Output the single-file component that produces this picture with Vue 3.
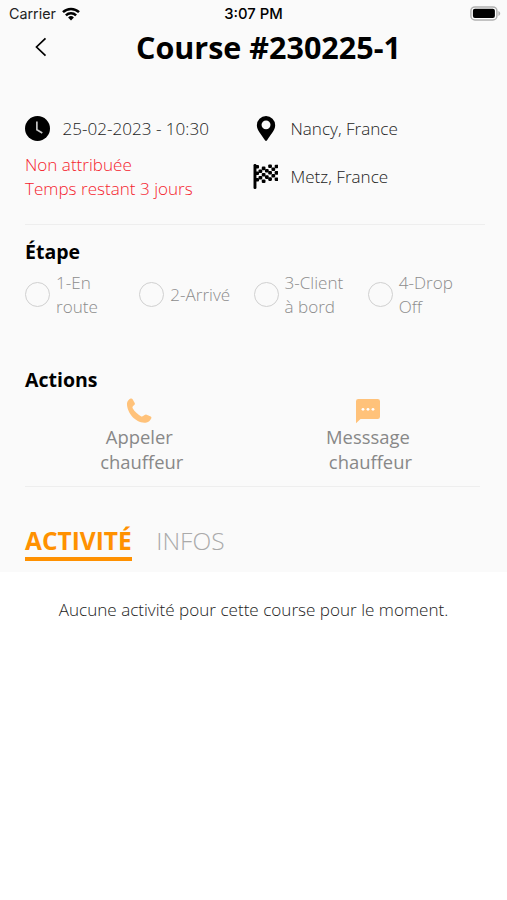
<script setup>
import { ref } from 'vue'

const onglet = ref('activite')

const etapes = [
  { id: 1, lignes: ['1-En', 'route'] },
  { id: 2, lignes: ['2-Arrivé'] },
  { id: 3, lignes: ['3-Client', 'à bord'] },
  { id: 4, lignes: ['4-Drop', 'Off'] }
]

// Cases noires du drapeau à damier
const cases = []
const vague = [0.8, 2, 2.3, 1.4, 0.2, 0.1, 0.4]
for (let l = 0; l < 5; l++) {
  for (let c = 0; c < 7; c++) {
    if ((l + c) % 2 === 0) {
      cases.push({ x: 2.2 + c * 3.1, y: 0.2 + l * 3.1 + vague[c] })
    }
  }
}
</script>

<template>
  <main class="ecran">
    <div class="haut">
      <div class="statut">
        <div class="reseau">
          <span class="operateur">Carrier</span>
          <svg width="18" height="14" viewBox="0 0 18 14">
            <g fill="none" stroke="#000" stroke-width="2.5">
              <path d="M1 5.2a11.4 11.4 0 0 1 16 0" />
              <path d="M3.9 8.3a7.3 7.3 0 0 1 10.2 0" />
            </g>
            <path d="M9 13.4 6.1 10.5a4.2 4.2 0 0 1 5.8 0z" />
          </svg>
        </div>
        <span class="heure">3:07 PM</span>
        <div class="batterie">
          <svg width="31" height="15" viewBox="0 0 31 15">
            <rect x=".9" y=".9" width="26" height="13" rx="4" fill="#fff" stroke="#b0b0b0" stroke-width="1.5" />
            <rect x="2.9" y="2.8" width="22" height="9.2" rx="2" />
            <path d="M28.4 5v5c1.1-.4 1.8-1.4 1.8-2.5s-.7-2.1-1.8-2.5z" fill="#b0b0b0" />
          </svg>
        </div>
      </div>

      <header class="entete">
        <button class="retour" aria-label="Retour">
          <svg width="12" height="20" viewBox="0 0 12 20">
            <path d="M10.5 1.3 1.5 10l9 8.7" fill="none" stroke="#000" stroke-width="1.7" />
          </svg>
        </button>
        <h1>Course #230225-1</h1>
      </header>

      <section class="resume">
        <div class="colonne">
          <div class="info">
            <svg class="icone" viewBox="0 0 24 24">
              <circle cx="12" cy="12" r="12" />
              <path d="M11.4 5.2v8l5.2 3.2" fill="none" stroke="#c9c9c9" stroke-width="1.6" />
            </svg>
            <span class="date">25-02-2023 - 10:30</span>
          </div>
          <p class="alerte">
            <span class="l1">Non attribuée</span>
            <span class="l2">Temps restant 3 jours</span>
          </p>
        </div>
        <div class="colonne">
          <div class="info">
            <svg class="icone" viewBox="0 0 24 24">
              <path fill-rule="evenodd" d="M12.5 0a8.8 8.8 0 0 0-8.8 8.8c0 5.2 4.4 8.7 7.8 14.5q1 1.4 2 0c3.4-5.8 7.8-9.3 7.8-14.5A8.8 8.8 0 0 0 12.5 0zm0 4.2a4.3 4.3 0 1 1 0 8.6 4.3 4.3 0 0 1 0-8.6z" />
            </svg>
            <span class="depart">Nancy, France</span>
          </div>
          <div class="info arrivee">
            <svg class="icone" viewBox="0 0 24 24">
              <rect x="0.5" y="0" width="2.8" height="24" rx="1.2" />
              <rect v-for="(c, i) in cases" :key="i" :x="c.x" :y="c.y" width="3.6" height="3.4" rx="1" />
            </svg>
            <span class="destination">Metz, France</span>
          </div>
        </div>
      </section>

      <section class="etape">
        <h2>Étape</h2>
        <ul class="etapes">
          <li v-for="e in etapes" :key="e.id">
            <i class="rond"></i>
            <span class="libelle"><span v-for="l in e.lignes" :key="l">{{ l }}</span></span>
          </li>
        </ul>
      </section>

      <section class="actions">
        <h2>Actions</h2>
        <div class="boutons">
          <button class="action">
            <svg width="26" height="26" viewBox="0 0 26 26">
              <path d="M1 5.3C1.2 3.4 2.8 1.5 4.6.6q1.3-.5 2 .7l2.1 3.6q.6 1.2-.5 2.2L6.9 8.3q-.7.9-.2 1.9c1.9 3.3 5 6.2 8.6 8.2q1 .4 1.8-.3l1.5-1.1q1-.8 2.1-.3l4 1.8q1.1.8.5 2c-1.1 2.1-2.7 3.6-4.6 4C10.5 26.3.5 14.900 1 5.300z" fill="#ffc27a" />
            </svg>
            <span>Appeler</span>
            <span class="suite">chauffeur</span>
          </button>
          <button class="action">
            <svg width="26" height="26" viewBox="0 0 26 26">
              <path d="M3.3 1h19.4q2.3 0 2.3 2.3v15.4q0 2.3-2.3 2.3H5.5L1 25.3V3.3Q1 1 3.3 1z" fill="#ffc27a" />
              <g fill="#fff"><circle cx="8" cy="11.3" r="1.4" /><circle cx="13" cy="11.3" r="1.4" /><circle cx="18" cy="11.3" r="1.4" /></g>
            </svg>
            <span>Messsage</span>
            <span class="suite">chauffeur</span>
          </button>
        </div>
      </section>

      <nav class="onglets">
        <button :class="{ actif: onglet === 'activite' }" @click="onglet = 'activite'"><span>ACTIVITÉ</span></button>
        <button :class="{ actif: onglet === 'infos' }" @click="onglet = 'infos'"><span>INFOS</span></button>
      </nav>
    </div>

    <p v-if="onglet === 'activite'" class="vide">Aucune activité pour cette course pour le moment.</p>
  </main>
</template>

<style>
body {
  margin: 0;
  background: #fff;
}
</style>

<style scoped>
.ecran {
  width: 507px;
  height: 900px;
  overflow: hidden;
  background: #fff;
  font-family: 'Open Sans', sans-serif;
  font-weight: 300;
  font-size: 17.08px;
  line-height: 24px;
  color: #222;
  white-space: nowrap;
}

.haut {
  height: 572px;
  background: #fafafa;
}

button {
  border: none;
  background: none;
  padding: 0;
  font: inherit;
  color: inherit;
  cursor: pointer;
}

h1, h2, p, ul {
  margin: 0;
  padding: 0;
}

h2 {
  font-size: 19.5px;
  line-height: 26px;
  font-weight: 700;
  color: #000;
}

/* Barre de statut */
.statut {
  display: grid;
  grid-template-columns: 1fr auto 1fr;
  align-items: center;
  height: 27px;
  padding: 0 6px 0 9px;
  font-family: Inter, sans-serif;
  font-size: 14px;
  color: #222;
}

.reseau {
  display: flex;
  align-items: center;
  gap: 6px;
  font-weight: 400;
}

.operateur {
  font-size: 14.3px;
}

.heure {
  margin-right: 3px;
  font-size: 14.8px;
  font-weight: 500;
  color: #000;
}

.batterie {
  display: flex;
  justify-content: flex-end;
}

/* Titre */
.entete {
  display: flex;
  align-items: center;
  height: 40px;
  padding-left: 35px;
}

.retour {
  display: flex;
  width: 101px;
}

h1 {
  font-size: 30.5px;
  line-height: 40px;
  font-weight: 700;
  color: #000;
}

/* Date et trajet */
.resume {
  display: flex;
  margin: 49px 22px 0 25px;
  height: 108px;
  border-bottom: 1px solid #eee;
}

.colonne {
  width: 228px;
}

.info {
  display: flex;
  align-items: center;
  gap: 12.5px;
  height: 24px;
}

.info span {
  padding-top: 1px;
}

.arrivee {
  margin-top: 24px;
}

.icone {
  width: 25px;
  height: 25px;
  flex: none;
}

.alerte {
  margin-top: 13px;
  color: #f5222d;
}

.alerte span {
  display: block;
}

/* Étapes */
.etape {
  margin: 14px 25px 0;
}

.etapes {
  display: flex;
  align-items: center;
  height: 48px;
  margin-top: 5px;
  list-style: none;
}

.etapes li {
  display: flex;
  align-items: center;
  gap: 6px;
  width: 114.3px;
  color: #8c8c8c;
}

.rond {
  box-sizing: border-box;
  width: 25px;
  height: 25px;
  border: 1px solid #d0d0d0;
  border-radius: 50%;
}

.libelle {
  padding-top: 1px;
}

.libelle span {
  display: block;
}

/* Actions */
.actions {
  margin: 49px 27px 0 25px;
  height: 119px;
  border-bottom: 1px solid #eee;
}

.boutons {
  display: flex;
  margin-top: 5px;
}

.action {
  display: flex;
  flex-direction: column;
  align-items: center;
  width: 228.6px;
  flex: none;
  font-size: 18.4px;
  line-height: 25px;
  font-weight: 400;
  color: #888;
}

.action svg {
  height: 26px;
}

.suite {
  padding-left: 5px;
}

/* Onglets */
.onglets {
  display: flex;
  gap: 24.5px;
  margin: 37px 25px 0;
  font-size: 24.5px;
  line-height: 34px;
  color: #aaa;
}

.onglets button {
  height: 33px;
  border-bottom: 4px solid transparent;
  box-sizing: content-box;
}

.onglets .actif {
  font-weight: 700;
  color: #ff9100;
  border-bottom-color: #ff9100;
}

.vide {
  margin-top: 26px;
  text-align: center;
}
</style>
